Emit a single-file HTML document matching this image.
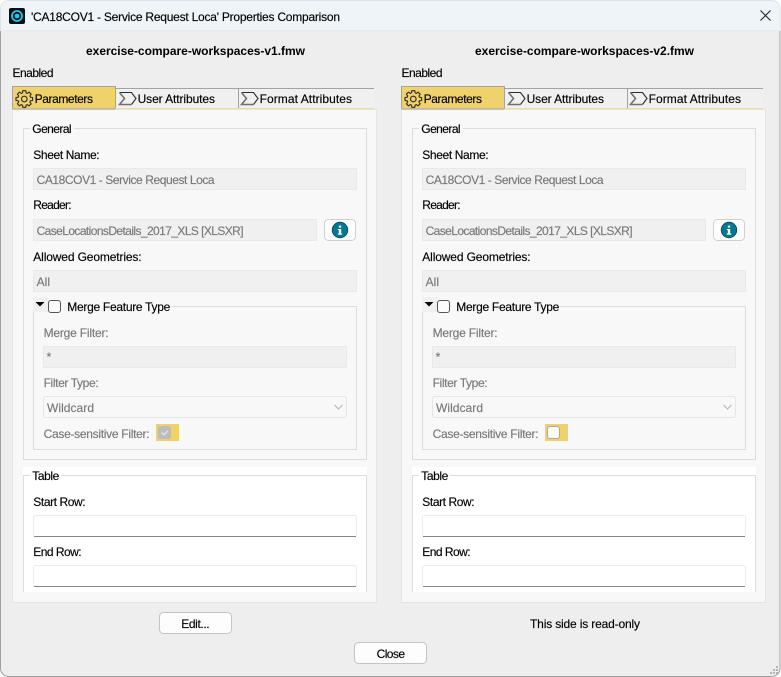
<!DOCTYPE html>
<html><head><meta charset="utf-8"><title>Properties Comparison</title>
<style>
html,body{margin:0;padding:0;background:#fff;width:781px;height:677px;overflow:hidden}
svg{display:block}
text{font-family:"Liberation Sans",sans-serif;font-size:12px;fill:#000;stroke:#000;stroke-width:.15;white-space:pre}
.d{fill:#787878;stroke:#787878}
.b{font-weight:bold;fill:#000;stroke:none}
.f{fill:#f0f0f0;stroke:#e9e9e9}
.g{fill:none;stroke:#dcdcdc}
.ic{fill:none;stroke:#2a2a2a;stroke-width:1.1}
</style></head><body>
<svg xmlns="http://www.w3.org/2000/svg" width="781" height="677" viewBox="0 0 781 677">
<rect x="0" y="0" width="781" height="677" fill="#fff"/>
<path d="M0.500 31V8.500A8 8 0 0 1 8.500 0.500H772A8 8 0 0 1 780 8.500V31Z" fill="#eff4f9" stroke="#dfe3e8"/>
<path d="M0.500 31V668.500A8 8 0 0 0 8.500 676.500H772A8 8 0 0 0 780 668.500V31Z" fill="#eeeeee"/>
<path d="M0.500 31V668.500A8 8 0 0 0 8.500 676.500H772A8 8 0 0 0 780 668.500V31" fill="none" stroke="#a0a0a0"/>
<rect x="9" y="8" width="16" height="16" rx="2" fill="#0b0f14"/>
<circle cx="17" cy="16" r="5" fill="none" stroke="#22c6ea" stroke-width="1.800"/>
<circle cx="17" cy="16" r="2.400" fill="#22c6ea"/>
<text x="31" y="21" textLength="309" lengthAdjust="spacing">'CA18COV1 - Service Request Loca' Properties Comparison</text>
<path d="M760.500 10.500L770.500 20.500M770.500 10.500L760.500 20.500" stroke="#222" stroke-width="1.100" fill="none"/>

<!-- LEFT SIDE -->
<text class="b" x="86" y="55" textLength="219" lengthAdjust="spacing">exercise-compare-workspaces-v1.fmw</text>
<text x="12.500" y="77" textLength="41" lengthAdjust="spacing">Enabled</text>
<rect x="12.500" y="109.500" width="364" height="493" fill="#f8f8f8" stroke="#e4e4e4"/>
<rect x="116" y="88" width="258" height="21" fill="#f0f0f0"/>
<path d="M116 88.500H374" stroke="#a3a3a3" fill="none"/>
<path d="M238.500 88V108" stroke="#a3a3a3" fill="none"/>
<path d="M116 108.500H374" stroke="#f0dc94" fill="none"/>
<rect x="12.500" y="86.500" width="103" height="22.500" fill="#efd26c" stroke="#a3a3a3"/>
<path d="M12.500 109H13M115 109H116" stroke="#efd26c"/>
<g transform="translate(24.300 99)" class="ic" stroke-linejoin="round">
<circle r="2.800"/>
<path d="M-1.800 -6.100L-1.500 -8.300H1.500L1.800 -6.100A6.400 6.400 0 0 1 3.040 -5.580L4.800 -6.900L6.900 -4.800L5.580 -3.040A6.400 6.400 0 0 1 6.100 -1.800L8.300 -1.500V1.500L6.100 1.800A6.400 6.400 0 0 1 5.580 3.040L6.900 4.800L4.800 6.900L3.040 5.580A6.400 6.400 0 0 1 1.800 6.100L1.500 8.300H-1.500L-1.800 6.100A6.400 6.400 0 0 1 -3.040 5.580L-4.800 6.900L-6.900 4.800L-5.580 3.040A6.400 6.400 0 0 1 -6.100 1.800L-8.300 1.500V-1.500L-6.100 -1.800A6.400 6.400 0 0 1 -5.580 -3.040L-6.900 -4.800L-4.800 -6.900L-3.040 -5.580A6.400 6.400 0 0 1 -1.800 -6.100Z"/>
</g>
<text x="34.600" y="103" textLength="58.400" lengthAdjust="spacing">Parameters</text>
<path d="M119.500 92.500H131.500L136 98.500L131.500 104.500" fill="none" stroke="#2c2c2c" stroke-width="1.100"/>
<path d="M119.500 92.500L124.500 98.500L119.500 104.500H131.500" fill="none" stroke="#6e6e6e" stroke-width="1.500"/>
<text x="137.600" y="103" textLength="77.400" lengthAdjust="spacing">User Attributes</text>
<path d="M241.500 92.500H253.500L258 98.500L253.500 104.500" fill="none" stroke="#2c2c2c" stroke-width="1.100"/>
<path d="M241.500 92.500L246.500 98.500L241.500 104.500H253.500" fill="none" stroke="#6e6e6e" stroke-width="1.500"/>
<text x="259.600" y="103" textLength="92.400" lengthAdjust="spacing">Format Attributes</text>

<rect class="g" x="23.500" y="128.500" width="343" height="331"/>
<rect x="30" y="122" width="44" height="12" fill="#f8f8f8"/>
<text x="32.300" y="133" textLength="39.300" lengthAdjust="spacing">General</text>
<text x="33.300" y="159" textLength="66.300" lengthAdjust="spacing">Sheet Name:</text>
<rect class="f" x="33.500" y="168.500" width="323" height="21"/>
<text class="d" x="36.600" y="184" textLength="178" lengthAdjust="spacing">CA18COV1 - Service Request Loca</text>
<text x="33.300" y="209" textLength="38.300" lengthAdjust="spacing">Reader:</text>
<rect class="f" x="33.500" y="219.500" width="283" height="21"/>
<text class="d" x="36.600" y="235" textLength="207" lengthAdjust="spacing">CaseLocationsDetails_2017_XLS [XLSXR]</text>
<rect x="324.500" y="219.500" width="31" height="21" rx="4" fill="#fdfdfd" stroke="#cfcfcf"/>
<circle cx="340" cy="230" r="7.800" fill="#00788f" stroke="#06465a" stroke-width="0.800"/>
<rect x="338.800" y="229" width="2.400" height="5" fill="#fff"/><rect x="337.800" y="229" width="2" height="1" fill="#fff"/><rect x="337.800" y="233.500" width="4.400" height="1.200" fill="#fff"/>
<rect x="338.800" y="225.600" width="2.400" height="2" fill="#fff"/>
<text x="33.300" y="261" textLength="108.300" lengthAdjust="spacing">Allowed Geometries:</text>
<rect class="f" x="33.500" y="270.500" width="323" height="21"/>
<text class="d" x="36.600" y="286" textLength="13.400" lengthAdjust="spacing">All</text>

<rect class="g" x="33.500" y="306.500" width="323" height="143"/>
<rect x="33" y="297" width="138" height="15" fill="#f8f8f8"/>
<rect x="33" y="297" width="15" height="15" fill="#f0f0f0"/>
<path d="M35.500 302H44.500L40 306.500Z" fill="#000"/>
<rect x="48.500" y="300.500" width="12" height="12" rx="2.500" fill="#fbfbfb" stroke="#555"/>
<text x="67.300" y="311" textLength="103" lengthAdjust="spacing">Merge Feature Type</text>
<text class="d" x="43.600" y="337" textLength="65" lengthAdjust="spacing">Merge Filter:</text>
<rect class="f" x="43.500" y="346.500" width="303" height="21"/>
<text class="d" x="46.600" y="361" textLength="4.500" lengthAdjust="spacing">*</text>
<text class="d" x="43.600" y="387" textLength="55" lengthAdjust="spacing">Filter Type:</text>
<rect x="43.500" y="396.500" width="303" height="21" rx="2" fill="#f8f8f8" stroke="#e6e6e6"/>
<text class="d" x="47" y="412" textLength="47" lengthAdjust="spacing">Wildcard</text>
<path d="M334.500 405L338.500 409L342.500 405" fill="none" stroke="#b5b5b5"/>
<text class="d" x="43.600" y="438" textLength="106" lengthAdjust="spacing">Case-sensitive Filter:</text>
<rect x="156" y="424" width="23" height="17" fill="#efd26c"/>
<rect x="158" y="426" width="13" height="13" rx="2.500" fill="#bcbcbc"/>
<path d="M161.500 432.500L163.800 434.800L168 430.800" fill="none" stroke="#ececec" stroke-width="1.100"/>

<rect x="23" y="467" width="344" height="125" fill="#fff"/>
<path class="g" d="M23.500 592V475.500H366.500V592"/>
<rect x="30" y="470" width="31" height="12" fill="#fff"/>
<text x="32.300" y="480" textLength="27" lengthAdjust="spacing">Table</text>
<text x="33.300" y="506" textLength="52.300" lengthAdjust="spacing">Start Row:</text>
<rect x="33.500" y="515.500" width="323" height="21" rx="2" fill="#fff" stroke="#ececec"/>
<path d="M34 536.500H356" stroke="#868686" fill="none"/>
<text x="33.300" y="556" textLength="48.300" lengthAdjust="spacing">End Row:</text>
<rect x="33.500" y="565.500" width="323" height="21" rx="2" fill="#fff" stroke="#ececec"/>
<path d="M34 586.500H356" stroke="#868686" fill="none"/>

<rect x="159.500" y="612.500" width="72" height="21" rx="4" fill="#fdfdfd" stroke="#c4c4c4"/>
<text x="181.300" y="628" textLength="28.300" lengthAdjust="spacing">Edit...</text>

<!-- RIGHT SIDE -->
<text class="b" x="475" y="55" textLength="219" lengthAdjust="spacing">exercise-compare-workspaces-v2.fmw</text>
<text x="401.500" y="77" textLength="41" lengthAdjust="spacing">Enabled</text>
<rect x="401.500" y="109.500" width="364" height="493" fill="#f8f8f8" stroke="#e4e4e4"/>
<rect x="505" y="88" width="258" height="21" fill="#f0f0f0"/>
<path d="M505 88.500H763" stroke="#a3a3a3" fill="none"/>
<path d="M627.500 88V108" stroke="#a3a3a3" fill="none"/>
<path d="M505 108.500H763" stroke="#f0dc94" fill="none"/>
<rect x="401.500" y="86.500" width="103" height="22.500" fill="#efd26c" stroke="#a3a3a3"/>
<path d="M401.500 109H402M504 109H505" stroke="#efd26c"/>
<g transform="translate(413.300 99)" class="ic" stroke-linejoin="round">
<circle r="2.800"/>
<path d="M-1.800 -6.100L-1.500 -8.300H1.500L1.800 -6.100A6.400 6.400 0 0 1 3.040 -5.580L4.800 -6.900L6.900 -4.800L5.580 -3.040A6.400 6.400 0 0 1 6.100 -1.800L8.300 -1.500V1.500L6.100 1.800A6.400 6.400 0 0 1 5.580 3.040L6.900 4.800L4.800 6.900L3.040 5.580A6.400 6.400 0 0 1 1.800 6.100L1.500 8.300H-1.500L-1.800 6.100A6.400 6.400 0 0 1 -3.040 5.580L-4.800 6.900L-6.900 4.800L-5.580 3.040A6.400 6.400 0 0 1 -6.100 1.800L-8.300 1.500V-1.500L-6.100 -1.800A6.400 6.400 0 0 1 -5.580 -3.040L-6.900 -4.800L-4.800 -6.900L-3.040 -5.580A6.400 6.400 0 0 1 -1.800 -6.100Z"/>
</g>
<text x="423.600" y="103" textLength="58.400" lengthAdjust="spacing">Parameters</text>
<path d="M508.500 92.500H520.500L525 98.500L520.500 104.500" fill="none" stroke="#2c2c2c" stroke-width="1.100"/>
<path d="M508.500 92.500L513.500 98.500L508.500 104.500H520.500" fill="none" stroke="#6e6e6e" stroke-width="1.500"/>
<text x="526.600" y="103" textLength="77.400" lengthAdjust="spacing">User Attributes</text>
<path d="M630.500 92.500H642.500L647 98.500L642.500 104.500" fill="none" stroke="#2c2c2c" stroke-width="1.100"/>
<path d="M630.500 92.500L635.500 98.500L630.500 104.500H642.500" fill="none" stroke="#6e6e6e" stroke-width="1.500"/>
<text x="648.600" y="103" textLength="92.400" lengthAdjust="spacing">Format Attributes</text>

<rect class="g" x="412.500" y="128.500" width="343" height="331"/>
<rect x="419" y="122" width="44" height="12" fill="#f8f8f8"/>
<text x="421.300" y="133" textLength="39.300" lengthAdjust="spacing">General</text>
<text x="422.300" y="159" textLength="66.300" lengthAdjust="spacing">Sheet Name:</text>
<rect class="f" x="422.500" y="168.500" width="323" height="21"/>
<text class="d" x="425.600" y="184" textLength="178" lengthAdjust="spacing">CA18COV1 - Service Request Loca</text>
<text x="422.300" y="209" textLength="38.300" lengthAdjust="spacing">Reader:</text>
<rect class="f" x="422.500" y="219.500" width="283" height="21"/>
<text class="d" x="425.600" y="235" textLength="207" lengthAdjust="spacing">CaseLocationsDetails_2017_XLS [XLSXR]</text>
<rect x="713.500" y="219.500" width="31" height="21" rx="4" fill="#fdfdfd" stroke="#cfcfcf"/>
<circle cx="729" cy="230" r="7.800" fill="#00788f" stroke="#06465a" stroke-width="0.800"/>
<rect x="727.800" y="229" width="2.400" height="5" fill="#fff"/><rect x="726.800" y="229" width="2" height="1" fill="#fff"/><rect x="726.800" y="233.500" width="4.400" height="1.200" fill="#fff"/>
<rect x="727.800" y="225.600" width="2.400" height="2" fill="#fff"/>
<text x="422.300" y="261" textLength="108.300" lengthAdjust="spacing">Allowed Geometries:</text>
<rect class="f" x="422.500" y="270.500" width="323" height="21"/>
<text class="d" x="425.600" y="286" textLength="13.400" lengthAdjust="spacing">All</text>

<rect class="g" x="422.500" y="306.500" width="323" height="143"/>
<rect x="422" y="297" width="138" height="15" fill="#f8f8f8"/>
<rect x="422" y="297" width="15" height="15" fill="#f0f0f0"/>
<path d="M424.500 302H433.500L429 306.500Z" fill="#000"/>
<rect x="437.500" y="300.500" width="12" height="12" rx="2.500" fill="#fbfbfb" stroke="#555"/>
<text x="456.300" y="311" textLength="103" lengthAdjust="spacing">Merge Feature Type</text>
<text class="d" x="432.600" y="337" textLength="65" lengthAdjust="spacing">Merge Filter:</text>
<rect class="f" x="432.500" y="346.500" width="303" height="21"/>
<text class="d" x="435.600" y="361" textLength="4.500" lengthAdjust="spacing">*</text>
<text class="d" x="432.600" y="387" textLength="55" lengthAdjust="spacing">Filter Type:</text>
<rect x="432.500" y="396.500" width="303" height="21" rx="2" fill="#f8f8f8" stroke="#e6e6e6"/>
<text class="d" x="436" y="412" textLength="47" lengthAdjust="spacing">Wildcard</text>
<path d="M723.500 405L727.500 409L731.500 405" fill="none" stroke="#b5b5b5"/>
<text class="d" x="432.600" y="438" textLength="106" lengthAdjust="spacing">Case-sensitive Filter:</text>
<rect x="545" y="424" width="23" height="17" fill="#efd26c"/>
<rect x="547.500" y="426.500" width="12" height="12" rx="2.500" fill="#fbfbfb" stroke="#a8a8a8"/>

<rect x="412" y="467" width="344" height="125" fill="#fff"/>
<path class="g" d="M412.500 592V475.500H755.500V592"/>
<rect x="419" y="470" width="31" height="12" fill="#fff"/>
<text x="421.300" y="480" textLength="27" lengthAdjust="spacing">Table</text>
<text x="422.300" y="506" textLength="52.300" lengthAdjust="spacing">Start Row:</text>
<rect x="422.500" y="515.500" width="323" height="21" rx="2" fill="#fff" stroke="#ececec"/>
<path d="M423 536.500H745" stroke="#868686" fill="none"/>
<text x="422.300" y="556" textLength="48.300" lengthAdjust="spacing">End Row:</text>
<rect x="422.500" y="565.500" width="323" height="21" rx="2" fill="#fff" stroke="#ececec"/>
<path d="M423 586.500H745" stroke="#868686" fill="none"/>

<text x="530" y="628" textLength="110" lengthAdjust="spacing">This side is read-only</text>
<rect x="354.500" y="642.500" width="72" height="21" rx="4" fill="#fdfdfd" stroke="#c4c4c4"/>
<text x="376.600" y="658" textLength="28.400" lengthAdjust="spacing">Close</text>

<g fill="#b4b4b4">
<rect x="776" y="666" width="2" height="2"/>
<rect x="773" y="669" width="2" height="2"/><rect x="776" y="669" width="2" height="2"/>
<rect x="770" y="672" width="2" height="2"/><rect x="773" y="672" width="2" height="2"/><rect x="776" y="672" width="2" height="2"/>
</g>
</svg>
</body></html>
